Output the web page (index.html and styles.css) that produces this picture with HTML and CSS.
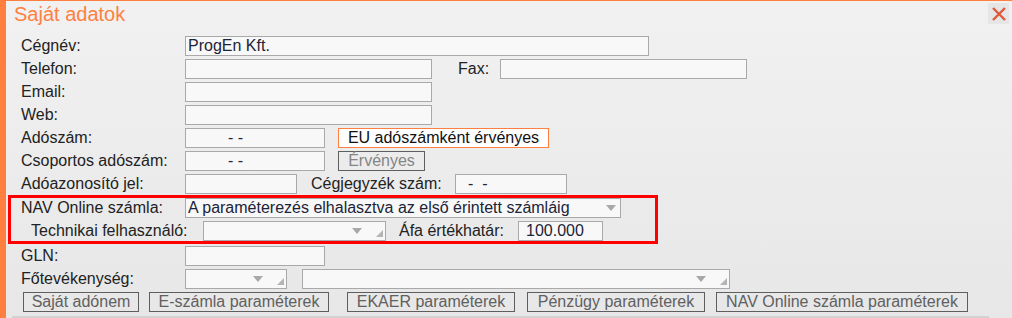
FILE: index.html
```html
<!DOCTYPE html>
<html>
<head>
	<title>Saját adatok</title>
	<link rel="stylesheet" href="styles.css">
</head>
<body>
	<div class="dialog">
		<div class="header">
			<span class="title">Saját adatok</span>
			<span class="close">
				<svg width="16" height="16" viewBox="0 0 16 16">
					<path d="M2 2 L14 14 M14 2 L2 14" stroke="#e0583a" stroke-width="2.4" fill="none"/>
				</svg>
			</span>
		</div>

		<div class="form">
			<div class="row">
				<label class="lbl">Cégnév:</label>
				<input class="field w-name" type="text" value="ProgEn Kft.">
			</div>
			<div class="row">
				<label class="lbl">Telefon:</label>
				<input class="field w-phone" type="text">
				<label class="lbl-fax">Fax:</label>
				<input class="field w-phone" type="text">
			</div>
			<div class="row">
				<label class="lbl">Email:</label>
				<input class="field w-phone" type="text">
			</div>
			<div class="row">
				<label class="lbl">Web:</label>
				<input class="field w-phone" type="text">
			</div>
			<div class="row">
				<label class="lbl">Adószám:</label>
				<input class="field w-tax masked" type="text" value="- -">
				<button class="btn btn-eu">EU adószámként érvényes</button>
			</div>
			<div class="row">
				<label class="lbl">Csoportos adószám:</label>
				<input class="field w-tax masked" type="text" value="- -">
				<button class="btn btn-valid">Érvényes</button>
			</div>
			<div class="row">
				<label class="lbl">Adóazonosító jel:</label>
				<input class="field w-id" type="text">
				<label class="lbl-reg">Cégjegyzék szám:</label>
				<input class="field w-id reg" type="text" value="-  -">
			</div>

			<div class="nav-box">
				<div class="row">
					<label class="lbl">NAV Online számla:</label>
					<div class="select w-nav">
						<span class="sel-text">A paraméterezés elhalasztva az első érintett számláig</span>
						<span class="arrow"></span>
					</div>
				</div>
				<div class="row">
					<label class="lbl lbl-tech">Technikai felhasználó:</label>
					<div class="select w-tech">
						<span class="arrow"></span>
						<span class="grip"></span>
					</div>
					<label class="lbl-vat">Áfa értékhatár:</label>
					<input class="field w-vat" type="text" value="100.000">
				</div>
			</div>

			<div class="row">
				<label class="lbl">GLN:</label>
				<input class="field w-tax" type="text">
			</div>
			<div class="row">
				<label class="lbl">Főtevékenység:</label>
				<div class="select w-act1">
					<span class="arrow"></span>
					<span class="grip"></span>
				</div>
				<div class="select w-act2">
					<span class="arrow"></span>
					<span class="grip"></span>
				</div>
			</div>

			<div class="buttons">
				<button class="btn b1">Saját adónem</button>
				<button class="btn b2">E-számla paraméterek</button>
				<button class="btn b3">EKAER paraméterek</button>
				<button class="btn b4">Pénzügy paraméterek</button>
				<button class="btn b5">NAV Online számla paraméterek</button>
			</div>
		</div>

		<div class="strip"></div>
	</div>
</body>
</html>
```

FILE: styles.css
```css
body {
	margin: 0;
	font-family: "Liberation Sans", Arial, sans-serif;
	font-size: 16px;
	color: #222;
}

.dialog {
	box-sizing: border-box;
	width: 1012px;
	height: 318px;
	border-left: 6px solid #ff7f3f;
	border-top: 1px solid #ff7f3f;
	background: linear-gradient(#f1f1f1, #e7e7e7);
	overflow: hidden;
}

/* header */

.header {
	display: flex;
	justify-content: space-between;
	align-items: flex-start;
	height: 35px;
}

.title {
	margin: 2px 0 0 8px;
	font-size: 20px;
	line-height: 23px;
	color: #ff8040;
}

.close {
	display: flex;
	align-items: center;
	justify-content: center;
	width: 21px;
	height: 21px;
	margin: 2px 3px 0 0;
	background: #e6e6e6;
}

/* form rows */

.form {
	padding-left: 15px;
}

.row {
	display: flex;
	align-items: center;
	height: 20px;
	margin-bottom: 3px;
	line-height: 20px;
}

.lbl {
	width: 164px;
	flex: none;
}

.lbl-fax {
	margin-left: 26px;
	width: 42px;
}

.lbl-reg {
	margin-left: 14px;
	width: 144px;
}

.lbl-vat {
	margin-left: 13px;
	width: 119px;
}

.field {
	box-sizing: border-box;
	height: 20px;
	margin: 0;
	padding: 0 2px;
	border: 1px solid #a9a9a9;
	background: #f8f8f8;
	font-family: "Liberation Sans", Arial, sans-serif;
	font-size: 16px;
	color: #1c2438;
	outline: none;
}

.w-name { width: 464px; }
.w-phone { width: 247px; }
.w-tax { width: 140px; }
.w-id { width: 112px; }
.w-vat { width: 85px; padding-left: 7px; }

.masked { padding-left: 42px; }
.reg { padding-left: 12px; }

/* select boxes */

.select {
	box-sizing: border-box;
	display: flex;
	align-items: center;
	height: 20px;
	border: 1px solid #a9a9a9;
	background: #f8f8f8;
	padding: 0 2px;
	position: relative;
	color: #1c2438;
}

.sel-text {
	flex: 1;
	white-space: nowrap;
	overflow: hidden;
}

.arrow {
	margin-left: auto;
	margin-right: 2px;
	width: 0;
	height: 0;
	border-left: 5px solid transparent;
	border-right: 5px solid transparent;
	border-top: 6px solid #a8a8a8;
}

.grip {
	align-self: flex-end;
	margin: 0 0 3px 12px;
	width: 0;
	height: 0;
	border-left: 7px solid transparent;
	border-bottom: 7px solid #b4b4b4;
}

.w-nav { width: 436px; }
.w-tech { width: 183px; }
.w-act1 { width: 102px; }
.w-act2 { width: 428px; margin-left: 15px; }

/* NAV highlight */

.nav-box {
	width: 650px;
	box-sizing: border-box;
	margin: -2px 0 2px -13px;
	padding: 0 0 0 10px;
	border: 3px solid #ff0000;
}

.nav-box .row:last-child {
	margin-bottom: 0;
}

.lbl-tech {
	width: 172px;
	padding-left: 10px;
}

/* buttons */

.btn {
	box-sizing: border-box;
	height: 20px;
	margin: 0;
	padding: 0;
	border: 1px solid #5e5e5e;
	background: transparent;
	font-family: "Liberation Sans", Arial, sans-serif;
	font-size: 16px;
	line-height: 18px;
	color: #606060;
}

.btn-eu {
	margin-left: 13px;
	width: 211px;
	border-color: #ff8040;
	background: #fff;
	color: #111;
}

.btn-valid {
	margin-left: 13px;
	width: 87px;
	color: #858585;
}

.buttons {
	display: flex;
	height: 21px;
	padding-left: 2px;
}

.b1 { width: 116px; }
.b2 { width: 180px; margin-left: 10px; }
.b3 { width: 168px; margin-left: 18px; }
.b4 { width: 178px; margin-left: 12px; }
.b5 { width: 252px; margin-left: 11px; }

.strip {
	margin: 3px 23px 0 6px;
	height: 6px;
	background: #d2d2d2;
}
```
